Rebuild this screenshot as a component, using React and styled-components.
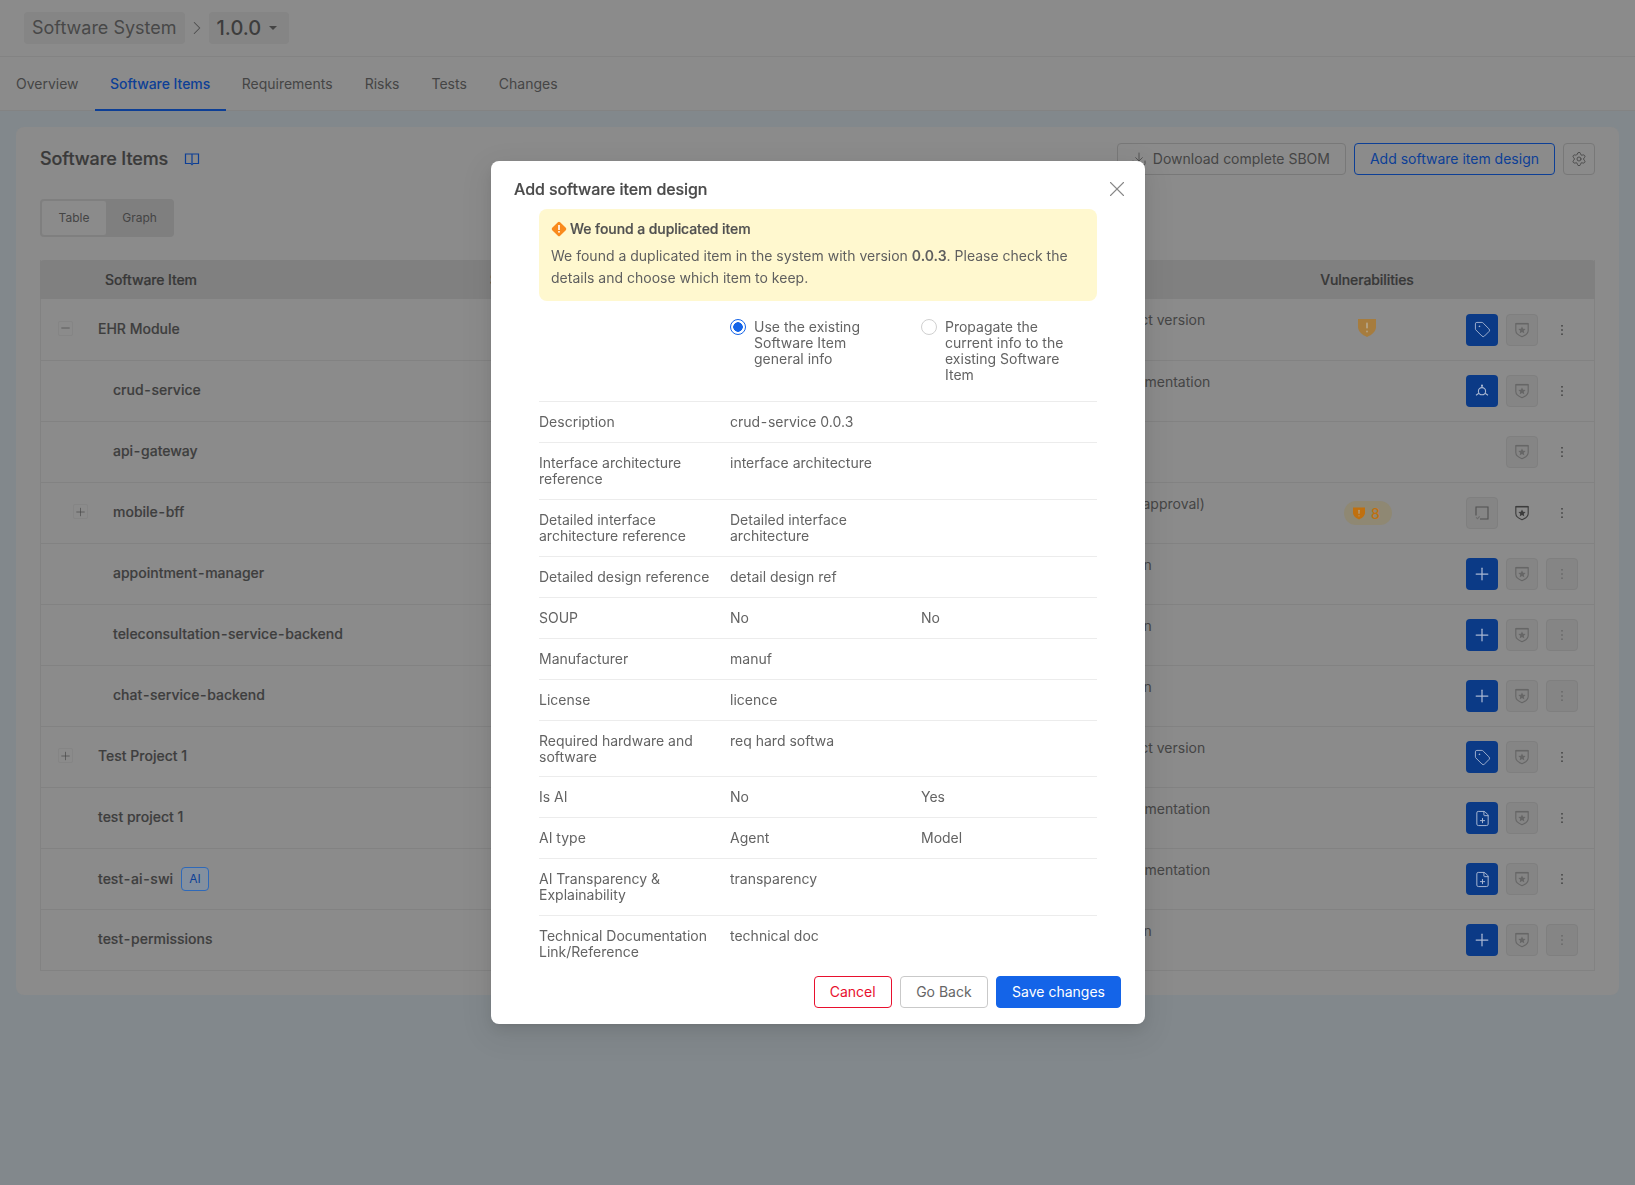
import React from "react";
import styled, { createGlobalStyle } from "styled-components";
import { Tag, FilePlus, Plus, Minus, Settings, Download, X, ChevronRight } from "lucide-react";

const Global = createGlobalStyle`
  html, body { margin: 0; height: 100%; background: #82888c; }
  body { font-family: Inter, "Noto Sans", "Liberation Sans", sans-serif; font-size: 14px; color: #444; overflow: hidden; }
  * { box-sizing: border-box; }
`;

const Page = styled.div`min-height: 1185px; background: #82888c;`;
const TopBar = styled.header`
  height: 57px; display: flex; align-items: center; gap: 1px; padding: 0 24px 1px;
  background: #8b8b8b; border-bottom: 1px solid #838383;
`;
const Chip = styled.div`
  height: 32px; display: flex; align-items: center; gap: 8px; padding: 0 8px; border-radius: 4px;
  background: #858585; font-size: ${p => p.$strong ? 20 : 18}px; font-weight: ${p => p.$strong ? 500 : 400};
  color: ${p => p.$strong ? "#3d3d3d" : "#484848"};
`;
const Caret = styled.span`
  width: 0; height: 0; margin: 0 4px 0 0; border-left: 4px solid transparent; border-right: 4px solid transparent;
  border-top: 4px solid #444;
`;
const Crumb = styled.span`display: flex; width: 22px; color: #4c4c4c;`;
const Tabs = styled.nav`
  height: 54px; display: flex; background: #8b8b8b; border-bottom: 1px solid #838383;
`;
const TabItem = styled.a`
  display: flex; align-items: center; padding: ${p => p.$active ? "0 15.5px" : "0 16px"}; height: 54px; margin-bottom: -1px; font-size: 14px;
  color: ${p => p.$active ? "#0d3f96" : "#454545"}; font-weight: ${p => p.$active ? 500 : 400};
  letter-spacing: ${p => p.$active ? "-0.05px" : "0"};
  border-bottom: 2px solid ${p => p.$active ? "#0d3f96" : "transparent"};
`;
const Content = styled.main`padding: 16px;`;
const Card = styled.section`background: #8b8b8b; border-radius: 8px; padding: 16px 24px 24px;`;
const CardHead = styled.div`display: flex; align-items: center; height: 32px;`;
const CardTitle = styled.h2`margin: 0; font-size: 18px; line-height: 24px; font-weight: 500; letter-spacing: -0.1px; color: #3a3a3a; -webkit-text-stroke: 0.2px #3a3a3a;`;
const BookBtn = styled.span`display: flex; margin-left: 16px; color: #0d3f96;`;
const HeadActions = styled.div`display: flex; gap: 8px; margin-left: auto;`;
const OutlineBtn = styled.button`
  height: 32px; padding: 0 15px 1px; display: flex; align-items: center; gap: 4px; font: inherit; font-size: 14px;
  background: transparent; border-radius: 4px; border: 1px solid ${p => p.$blue ? "#0d3f96" : "#787878"};
  color: ${p => p.$blue ? "#0d3f96" : "#454545"};
`;
const DownloadGlyph = styled(Download)`margin: 0 2px 0 -2px;`;
const GearBtn = styled(OutlineBtn)`width: 32px; padding: 0; justify-content: center;`;
const Segment = styled.div`
  display: flex; width: 134px; height: 38px; padding: 2px; margin: 24px 0 23px; background: #7f7f7f; border-radius: 4px;
`;
const SegItem = styled.div`
  flex: ${p => p.$active ? "0 0 64px" : 1}; display: flex; align-items: center; justify-content: center; font-size: 12px;
  padding: ${p => p.$active ? "0 0 1px" : "0 0 1px 1px"};
  border-radius: 2px; color: #444; background: ${p => p.$active ? "#8b8b8b" : "transparent"};
`;
const Table = styled.div`border: 1px solid #828282; border-top: 0;`;
const cols = "448px 546px 235px 196px 128px";
const HeadRow = styled.div`
  display: grid; grid-template-columns: ${cols}; height: 39px; align-items: center; margin: 0 -1px;
  background: #808080; border-radius: 4px 4px 0 0; color: #383838; font-weight: 500; font-size: 14px; letter-spacing: -0.1px;
  -webkit-text-stroke: 0.2px #383838;
`;
const HeadCell = styled.div`
  padding-left: ${p => p.$pad || 0}px; text-align: ${p => p.$center ? "center" : "left"};
`;
const Row = styled.div`
  display: grid; grid-template-columns: ${cols}; height: 61px; align-items: center;
  & + & { border-top: 1px solid #828282; }
`;
const NameCell = styled.div`
  display: flex; align-items: center; padding: 0 0 ${p => p.$ai ? 1 : 3}px ${p => 17 + p.$depth * 15}px; font-weight: 500; color: #3e3e3e;
  -webkit-text-stroke: 0.15px #3e3e3e;
`;
const ToggleSlot = styled.span`
  flex: 0 0 15px; width: 15px; height: 15px; margin-right: 25px; display: flex; align-items: center; justify-content: center;
  border-radius: 2px; color: #444; border: 1px solid ${p => p.$on ? "#858585" : "transparent"};
`;
const Hyphen = styled.span`margin: 0 0.7px;`;
const AiBadge = styled.span`
  margin-left: 8px; height: 24px; width: 28px; display: flex; align-items: center; justify-content: center;
  border: 1px solid #2f69b8; border-radius: 4px; background: #84909f; color: #0d3f96; font-size: 12px; font-weight: 400;
  -webkit-text-stroke: 0;
`;
const StatusCell = styled.div`
  align-self: start; padding-top: 10px; line-height: 21px; color: #454545; white-space: nowrap;
`;
const VulnCell = styled.div`display: flex; justify-content: center; padding-bottom: 4px;`;
const BigShield = styled.span`display: flex; margin-right: 2px; color: #a67c3e;`;
const Pill = styled.span`
  display: flex; align-items: center; gap: 6px; width: 48px; height: 24px; padding-left: 9px; margin-top: 4px; border-radius: 12px;
  background: #8f8873; color: #c0700f; font-size: 14px; font-weight: 500;
`;
const Actions = styled.div`display: flex; gap: 8px;`;
const ActBtn = styled.span`
  width: 32px; height: 32px; display: flex; align-items: center; justify-content: center; border-radius: 4px;
  ${p => p.$kind === "primary" && "background:#0b3a86;color:#a9b7d2;"}
  ${p => p.$kind === "muted" && "background:#858585;border:1px solid #7f7f7f;color:#666;"}
  ${p => p.$kind === "ghost" && "color:#3c3c3c;"}
`;

const Modal = styled.div`
  position: fixed; left: 491px; top: 161px; width: 654px; height: 863px; display: flex; flex-direction: column;
  background: #fff; border-radius: 8px; color: #636363;
  box-shadow: 0 6px 16px rgba(0,0,0,.08), 0 3px 6px -4px rgba(0,0,0,.12), 0 9px 28px 8px rgba(0,0,0,.05);
`;
const ModalHead = styled.div`
  flex: 0 0 48px; display: flex; align-items: center; justify-content: space-between; padding: 8px 15px 0 23px;
`;
const ModalTitle = styled.h3`margin: 0; font-size: 16px; line-height: 24px; font-weight: 500; letter-spacing: -0.08px; color: #4a4a4a; -webkit-text-stroke: 0.2px #4a4a4a;`;
const CloseBtn = styled.span`display: flex; color: #888;`;
const ModalBody = styled.div`flex: 1; min-height: 0; overflow: hidden; padding: 0 48px;`;
const Alert = styled.div`
  height: 92px; padding: 10px 12px; border-radius: 8px; background: #fff8cf; color: #5f5f5f; line-height: 22px;
`;
const AlertTitle = styled.div`display: flex; align-items: center; gap: 3px; height: 20px; font-weight: 500; letter-spacing: -0.08px; color: #505050; margin-bottom: 6px; -webkit-text-stroke: 0.2px #505050;`;
const Strong = styled.b`font-weight: 600;`;
const ChoiceRow = styled.div`
  display: grid; grid-template-columns: 191px 191px 1fr; padding: 18px 0; line-height: 16px;
`;
const Choice = styled.div`display: flex; gap: 8px; align-items: flex-start;`;
const Radio = styled.span`
  flex: 0 0 16px; height: 16px; border-radius: 50%;
  border: 1px solid ${p => p.$on ? "#1464e8" : "#d0d0d0"};
  background: ${p => p.$on ? "radial-gradient(circle, #1464e8 0 4.5px, #fff 5px)" : "#fff"};
`;
const ChoiceLabel = styled.span`max-width: 130px;`;
const InfoRow = styled.div`
  display: grid; grid-template-columns: 191px 191px 1fr; padding: 12px 0; line-height: 1.14; border-top: 1px solid #ececec;
`;
const InfoLabel = styled.div`padding-right: 12px;`;
const ModalFoot = styled.div`
  flex: 0 0 64px; display: flex; justify-content: flex-end; gap: 8px; padding: 16px 24px;
`;
const FootBtn = styled.button`
  height: 32px; padding: ${p => p.$kind === "plain" ? "0 15.5px 1px" : "0 15px 1px"}; font: inherit; font-size: 14px; border-radius: 4px; background: #fff;
  ${p => p.$kind === "danger" && "border:1px solid #e8102e;color:#e8102e;"}
  ${p => p.$kind === "plain" && "border:1px solid #c9c9c9;color:#666;"}
  ${p => p.$kind === "primary" && "border:1px solid #1464e8;background:#1464e8;color:#fff;"}
`;

const ShieldStar = () => (
  <svg width="18" height="18" viewBox="0 0 16 16" fill="none">
    <path d="M2.5 2.2h11v6.3c0 2.6-2.6 4.4-5.5 5.5-2.9-1.1-5.5-2.9-5.5-5.5z" stroke="currentColor" strokeWidth="1" strokeLinejoin="round" />
    <path d="M2.5 2.4h11" stroke="currentColor" strokeWidth="1.4" />
    <path d="M8 4.8l1 2 2.2.3-1.6 1.5.4 2.2-2-1-2 1 .4-2.2-1.6-1.5 2.2-.3z" fill="currentColor" />
  </svg>
);
const Graph = () => (
  <svg width="16" height="16" viewBox="0 0 16 16" fill="none" stroke="currentColor" strokeWidth="1.1">
    <circle cx="8" cy="8.2" r="3.6" />
    <path d="M8 2.4v2.2M2 12.2l2.9-1.9M14 12.2l-2.9-1.9" />
    <circle cx="8" cy="2.6" r=".5" fill="currentColor" />
  </svg>
);
const CheckSquare = () => (
  <svg width="16" height="16" viewBox="0 0 16 16" fill="none" stroke="#505050" strokeWidth="1.1">
    <path d="M6 14h8V2H2v8.5" />
    <path d="M2.2 12.4l1.3 1.4L5.6 11.4" stroke="#6c6c6c" />
  </svg>
);
const Kebab = () => (
  <svg width="16" height="16" viewBox="0 0 16 16" fill="currentColor">
    <rect x="7.3" y="3" width="1.4" height="1.6" /><rect x="7.3" y="7.2" width="1.4" height="1.6" /><rect x="7.3" y="11.4" width="1.4" height="1.6" />
  </svg>
);
const Book = () => (
  <svg width="16" height="16" viewBox="0 0 16 16" fill="none" stroke="currentColor" strokeWidth="1.2">
    <path d="M1.5 3h13v9.5H9L8 13.6 7 12.5H1.5zM8 3v9" />
  </svg>
);
const ShieldAlert = ({ w = 18, h = 18, mark = "#b3a080" }) => (
  <svg width={w} height={h} viewBox="0 0 18 18">
    <path d="M0 0h18v8c0 4.4-4 7.8-9 10C4 15.8 0 12.4 0 8z" fill="currentColor" />
    <rect x="8" y="3.5" width="2" height="6" rx=".8" fill={mark} />
    <rect x="8" y="11.5" width="2" height="2" rx="1" fill={mark} />
  </svg>
);
const AlertDiamond = () => (
  <svg width="16" height="16" viewBox="0 0 16 16">
    <rect x="2.4" y="2.4" width="11.2" height="11.2" rx="1.6" fill="#f98a1c" transform="rotate(45 8 8)" />
    <rect x="7.2" y="4" width="1.6" height="5" fill="#fff" />
    <rect x="7.2" y="10" width="1.6" height="1.6" fill="#fff" />
  </svg>
);

const Spaced = ({ text }) => {
  const parts = text.split("-");
  return parts.map((part, i) => (
    <React.Fragment key={i}>{i > 0 && <Hyphen>-</Hyphen>}{part}</React.Fragment>
  ));
};

const tabs = ["Overview", "Software Items", "Requirements", "Risks", "Tests", "Changes"];
const st = {
  version: ["Select the correct version", "x"],
  doc: ["Upload the documentation", "x"],
  approval: ["Under (pending approval)", "x"],
  add: ["Add a description", "x"],
  none: ["", ""],
};
const items = [
  { name: "EHR Module", depth: 0, toggle: "minus", status: st.version, vuln: "icon", first: "tag" },
  { name: "crud-service", depth: 1, status: st.doc, first: "graph" },
  { name: "api-gateway", depth: 1, status: st.none, first: null },
  { name: "mobile-bff", depth: 1, toggle: "plus", status: st.approval, vuln: "pill", first: "check" },
  { name: "appointment-manager", depth: 1, status: st.add, first: "plus", boxed: true },
  { name: "teleconsultation-service-backend", depth: 1, status: st.add, first: "plus", boxed: true },
  { name: "chat-service-backend", depth: 1, status: st.add, first: "plus", boxed: true },
  { name: "Test Project 1", depth: 0, toggle: "plus", status: st.version, first: "tag" },
  { name: "test project 1", depth: 0, status: st.doc, first: "file" },
  { name: "test-ai-swi", depth: 0, ai: true, status: st.doc, first: "file" },
  { name: "test-permissions", depth: 0, status: st.add, first: "plus", boxed: true },
];
const firstIcon = {
  tag: <Tag size={17} strokeWidth={1.3} />,
  graph: <Graph />,
  plus: <Plus size={20} strokeWidth={1.5} />,
  file: <FilePlus size={17} strokeWidth={1.4} />,
};
const info = [
  ["Description", "crud-service 0.0.3", ""],
  ["Interface architecture reference", "interface architecture", ""],
  ["Detailed interface architecture reference", "Detailed interface architecture", ""],
  ["Detailed design reference", "detail design ref", ""],
  ["SOUP", "No", "No"],
  ["Manufacturer", "manuf", ""],
  ["License", "licence", ""],
  ["Required hardware and software", "req hard softwa", ""],
  ["Is AI", "No", "Yes"],
  ["AI type", "Agent", "Model"],
  ["AI Transparency & Explainability", "transparency", ""],
  ["Technical Documentation Link/Reference", "technical doc", ""],
];

export default function App() {
  return (
    <Page>
      <Global />
      <TopBar>
        <Chip>Software System</Chip>
        <Crumb><ChevronRight size={22} strokeWidth={1.1} /></Crumb>
        <Chip $strong>1.0.0<Caret /></Chip>
      </TopBar>
      <Tabs>
        {tabs.map(t => <TabItem key={t} $active={t === "Software Items"}>{t}</TabItem>)}
      </Tabs>
      <Content>
        <Card>
          <CardHead>
            <CardTitle>Software Items</CardTitle>
            <BookBtn><Book /></BookBtn>
            <HeadActions>
              <OutlineBtn><DownloadGlyph size={16} strokeWidth={1.2} />Download complete SBOM</OutlineBtn>
              <OutlineBtn $blue>Add software item design</OutlineBtn>
              <GearBtn><Settings size={16} strokeWidth={1.3} /></GearBtn>
            </HeadActions>
          </CardHead>
          <Segment>
            <SegItem $active>Table</SegItem>
            <SegItem>Graph</SegItem>
          </Segment>
          <Table>
            <HeadRow>
              <HeadCell $pad={65}>Software Item</HeadCell>
              <HeadCell $pad={2}>Status</HeadCell>
              <HeadCell />
              <HeadCell $center>Vulnerabilities</HeadCell>
              <HeadCell />
            </HeadRow>
            {items.map(it => (
              <Row key={it.name}>
                <NameCell $depth={it.depth} $ai={it.ai}>
                  <ToggleSlot $on={!!it.toggle}>
                    {it.toggle === "minus" && <Minus size={14} strokeWidth={1.2} />}
                    {it.toggle === "plus" && <Plus size={14} strokeWidth={1.2} />}
                  </ToggleSlot>
                  <span><Spaced text={it.name} /></span>
                  {it.ai && <AiBadge>AI</AiBadge>}
                </NameCell>
                <div />
                <StatusCell>{it.status[0]}<br />{it.status[1]}</StatusCell>
                <VulnCell>
                  {it.vuln === "icon" && <BigShield><ShieldAlert /></BigShield>}
                  {it.vuln === "pill" && <Pill><ShieldAlert w={12} h={13} />8</Pill>}
                </VulnCell>
                <Actions>
                  {it.first === null && <ActBtn />}
                  {it.first === "check" && <ActBtn $kind="muted"><CheckSquare /></ActBtn>}
                  {firstIcon[it.first] && <ActBtn $kind="primary">{firstIcon[it.first]}</ActBtn>}
                  <ActBtn $kind={it.first === "check" ? "ghost" : "muted"}><ShieldStar /></ActBtn>
                  <ActBtn $kind={it.boxed ? "muted" : "ghost"}><Kebab /></ActBtn>
                </Actions>
              </Row>
            ))}
          </Table>
        </Card>
      </Content>
      <Modal role="dialog">
        <ModalHead>
          <ModalTitle>Add software item design</ModalTitle>
          <CloseBtn><X size={26} strokeWidth={1} /></CloseBtn>
        </ModalHead>
        <ModalBody>
          <Alert>
            <AlertTitle><AlertDiamond />We found a duplicated item</AlertTitle>
            We found a duplicated item in the system with version <Strong>0.0.3</Strong>. Please check the details and choose which item to keep.
          </Alert>
          <ChoiceRow>
            <div />
            <Choice><Radio $on /><ChoiceLabel>Use the existing Software Item general info</ChoiceLabel></Choice>
            <Choice><Radio /><ChoiceLabel>Propagate the current info to the existing Software Item</ChoiceLabel></Choice>
          </ChoiceRow>
          {info.map(r => (
            <InfoRow key={r[0]}>
              <InfoLabel>{r[0]}</InfoLabel>
              <InfoLabel><Spaced text={r[1]} /></InfoLabel>
              <div>{r[2]}</div>
            </InfoRow>
          ))}
        </ModalBody>
        <ModalFoot>
          <FootBtn $kind="danger">Cancel</FootBtn>
          <FootBtn $kind="plain">Go Back</FootBtn>
          <FootBtn $kind="primary">Save changes</FootBtn>
        </ModalFoot>
      </Modal>
    </Page>
  );
}
